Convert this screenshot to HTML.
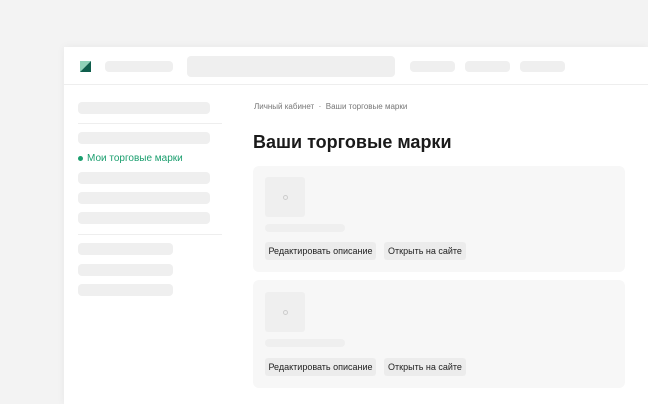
<!DOCTYPE html>
<html style="overflow:hidden"><head><meta charset="utf-8"><style>
*{margin:0;padding:0;box-sizing:border-box}
html,body{width:648px;height:404px;overflow:hidden}
body{background:#f3f3f3;font-family:"Liberation Sans",sans-serif;position:relative}
.a{position:absolute}
.win{left:64px;top:47px;width:584px;height:357px;background:#fff;box-shadow:0 0 8px rgba(0,0,0,.05)}
.b{background:#efefef;border-radius:4px}
.card{background:#f7f7f7;border-radius:6px}
.img{background:#efefef;border-radius:3px;width:40px;height:40px}
.btn{background:#ececec;border-radius:3px;font-size:9px;color:#222;line-height:18px;text-align:center;height:18px}
.ic{width:5px;height:5px;border-radius:50%;border:1px solid #ccc;left:18px;top:18px}
</style></head><body>
<div class="a win"></div>
<div class="a" style="left:64px;top:84px;width:584px;height:1px;background:#eee"></div>
<svg class="a" style="left:80px;top:61px" width="11" height="11"><polygon points="0,0 11,0 0,11" fill="#8fd1b8"/><polygon points="11,0 11,11 0,11" fill="#0f5e4c"/></svg>
<div class="a b" style="left:105px;top:61px;width:68px;height:11px"></div>
<div class="a b" style="left:187px;top:56px;width:208px;height:21px"></div>
<div class="a b" style="left:410px;top:61px;width:45px;height:11px"></div>
<div class="a b" style="left:465px;top:61px;width:45px;height:11px"></div>
<div class="a b" style="left:520px;top:61px;width:45px;height:11px"></div>

<div class="a b" style="left:78px;top:102px;width:132px;height:12px"></div>
<div class="a" style="left:78px;top:123px;width:144px;height:1px;background:#eee"></div>
<div class="a b" style="left:78px;top:132px;width:132px;height:12px"></div>
<div class="a" style="left:78px;top:156px;width:5px;height:5px;border-radius:50%;background:#1a9e6e"></div>
<div class="a" style="left:87px;top:152px;font-size:10px;color:#1a9e6e;line-height:13px">Мои торговые марки</div>
<div class="a b" style="left:78px;top:172px;width:132px;height:12px"></div>
<div class="a b" style="left:78px;top:192px;width:132px;height:12px"></div>
<div class="a b" style="left:78px;top:212px;width:132px;height:12px"></div>
<div class="a" style="left:78px;top:234px;width:144px;height:1px;background:#eee"></div>
<div class="a b" style="left:78px;top:243px;width:95px;height:12px"></div>
<div class="a b" style="left:78px;top:264px;width:95px;height:12px"></div>
<div class="a b" style="left:78px;top:284px;width:95px;height:12px"></div>

<div class="a" style="left:254px;top:102px;font-size:8px;color:#777;line-height:10px">Личный кабинет &nbsp;·&nbsp; Ваши торговые марки</div>
<div class="a" style="left:253px;top:131px;font-size:18px;font-weight:bold;color:#1a1a1a;line-height:22px">Ваши торговые марки</div>

<div class="a card" style="left:253px;top:166px;width:372px;height:106px"></div>
<div class="a img" style="left:265px;top:177px"><div class="a ic"></div></div>
<div class="a b" style="left:265px;top:224px;width:80px;height:8px"></div>
<div class="a btn" style="left:265px;top:242px;width:111px">Редактировать описание</div>
<div class="a btn" style="left:384px;top:242px;width:82px">Открыть на сайте</div>

<div class="a card" style="left:253px;top:280px;width:372px;height:108px"></div>
<div class="a img" style="left:265px;top:292px"><div class="a ic"></div></div>
<div class="a b" style="left:265px;top:339px;width:80px;height:8px"></div>
<div class="a btn" style="left:265px;top:358px;width:111px">Редактировать описание</div>
<div class="a btn" style="left:384px;top:358px;width:82px">Открыть на сайте</div>
</body></html>
